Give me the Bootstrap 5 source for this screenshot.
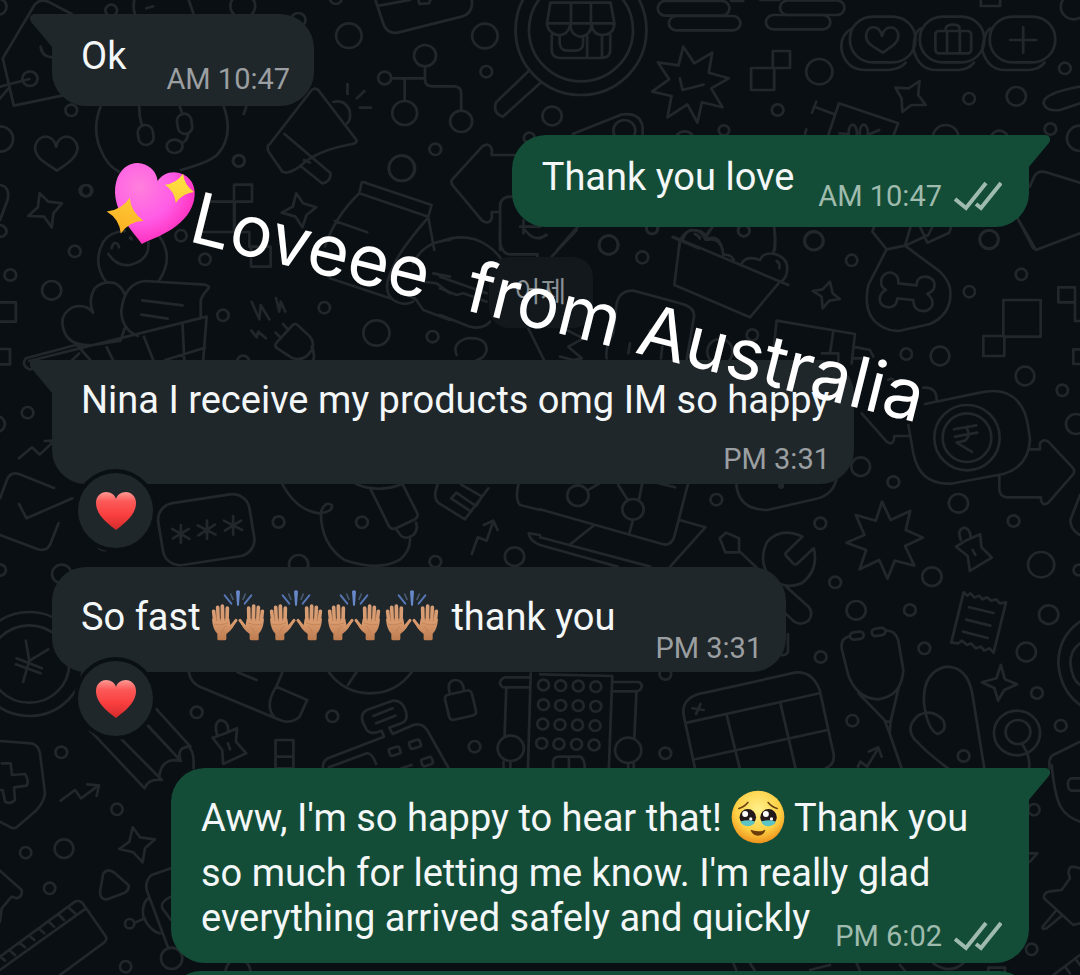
<!DOCTYPE html>
<html lang="en">
<head>
<meta charset="utf-8">
<meta name="viewport" content="width=device-width, initial-scale=1">
<title>Chat</title>
<link rel="stylesheet" href="https://cdn.jsdelivr.net/npm/bootstrap@5.3.0/dist/css/bootstrap.min.css">
<style>
body{background:#0a0f13;font-family:Roboto,"Noto Sans CJK KR",sans-serif;color:#f4f7f8}
.chat{height:100vh;padding:14px 51px 0 52px}
.wall{top:0;left:0;width:100%;height:100%;z-index:0;fill:none;stroke:#22272b;stroke-width:8;stroke-linecap:round;stroke-linejoin:round}
.bubble{z-index:1;border-radius:34px;background:#20272b;padding:20px 24px 9px 29px;font-size:38px;line-height:45px;max-width:858px}
.bubble.sent{background:#144d37;padding-left:30px;padding-right:27px;align-self:flex-end}
.bubble.tail-l{border-top-left-radius:0}
.sent.tail-r{border-top-right-radius:0}
.tail{top:0;width:22px;height:34px}
.tail-l>.tail{left:-22px;fill:#20272b}
.tail-r>.tail{right:-21px;fill:#144d37}
.says{margin:0;padding-bottom:18px}
.bubble.rich{padding-top:22px;padding-bottom:6px}
.rich .says{padding-bottom:16px}
.when{font-size:29px;line-height:36px;color:#9b9fa1;white-space:nowrap}
.sent .when{color:#9ebbad}
.far{gap:40px}.near{gap:24px}
.ticks{width:48px;height:30px;margin-left:12px;fill:none;stroke:#9ebbad;stroke-width:4}
.foot{right:27px;bottom:9px}
.emo{height:54px;margin-bottom:7px;vertical-align:-20px}
.hands{width:58px}
.face{width:54px}
.day{z-index:1;align-self:center;background:#12181c;border-radius:20px;width:104px;height:71px;line-height:71px;font-size:28px;color:#899094;text-align:center}
.react{left:26px;bottom:-64px;width:75px;height:75px;border:0;background:#20272b;box-shadow:0 0 0 4px #0a0f13}
.react svg{width:42px;height:40px}
.bubble.wide{padding-top:18px;padding-bottom:7px;width:802px;max-width:100%}
.wide .says{margin-right:-12px}
.caption{z-index:3;left:120px;top:154px;font-family:Inter,sans-serif;font-size:71px;line-height:84px;color:#fff;white-space:pre;transform:rotate(14deg);transform-origin:0 0}
.caption svg{width:86px;height:84px}
.next{height:60px}
.g1{margin-top:29px}.g2{margin-top:30px}.g3{margin-top:32px}.g4{margin-top:83px}.g5{margin-top:96px}.g6{margin-top:8px}
</style>
</head>
<body>
<svg width="0" height="0" class="position-absolute" aria-hidden="true">
  <defs>
    <linearGradient id="skin" x1="0" y1="70" x2="0" y2="182" gradientUnits="userSpaceOnUse"><stop offset="0" stop-color="#d69f78"/><stop offset=".5" stop-color="#d99a6d"/><stop offset="1" stop-color="#bd7b4e"/></linearGradient>
    <linearGradient id="red" x1="0" y1="0" x2="0" y2="1"><stop offset="0" stop-color="#ff9a94"/><stop offset=".25" stop-color="#fb5a58"/><stop offset=".6" stop-color="#fa3f40"/><stop offset="1" stop-color="#d42a2a"/></linearGradient>
    <radialGradient id="pink" cx=".3" cy=".3" r=".85"><stop offset="0" stop-color="#ff7fdc"/><stop offset=".5" stop-color="#ff5ce6"/><stop offset="1" stop-color="#ff1fae"/></radialGradient>
    <linearGradient id="gold" x1="0" y1="0" x2="0" y2="1"><stop offset="0" stop-color="#ffe345"/><stop offset="1" stop-color="#fcaf22"/></linearGradient>
    <radialGradient id="sun" cx=".5" cy=".35" r=".65"><stop offset="0" stop-color="#fff08a"/><stop offset=".65" stop-color="#fdd044"/><stop offset="1" stop-color="#ee921c"/></radialGradient>
    <g id="palm" stroke="url(#skin)" stroke-linecap="round" fill="none">
      <path d="M39 93L43 128M51 81L53 128M65 77L66 128M80 83L79 128" stroke-width="11"/>
      <path d="M106 120L90 141" stroke-width="9"/>
      <path d="M34 115L86 115L89 134L106 118Q100 145 77 161V176Q77 180 72 180H54Q49 180 50 174V160Q36 147 34 115Z" fill="url(#skin)" stroke="none"/>
      <path d="M40 132Q60 138 82 128M76 137Q66 145 63 156" stroke="#a86a42" stroke-width="2" opacity=".6"/>
      <path d="M45 90L48 121M58 82L59 121M73 84L72 121" stroke="#9a6544" stroke-width="2" opacity=".7"/>
    </g>
    <symbol id="raise" viewBox="28 26 174 162">
      <path d="M106 33Q112 27 118 33L115 74Q112 80 109 74Z" fill="#6688c8"/>
      <path d="M72 45L92 70M152 45L132 70" stroke="#5576b4" stroke-width="6" stroke-linecap="round"/>
      <path d="M90 41L97 57M134 41L127 57" stroke="#46596f" stroke-width="5" stroke-linecap="round"/>
      <use href="#palm"/><use href="#palm" transform="matrix(-1 0 0 1 224 0)"/>
    </symbol>
    <symbol id="heart" viewBox="0 0 42 40"><path d="M21 39C15 34 1 25 1 12C1 5 6 1 11 1C16 1 20 4 21 8C22 4 26 1 31 1C36 1 41 5 41 12C41 25 27 34 21 39Z" fill="url(#red)"/></symbol>
    <symbol id="tick" viewBox="0 0 48 30"><path d="M1 18L12 27L32 2M22 23L27 27L47 2"/></symbol>
    <symbol id="point" viewBox="0 0 22 34"><path d="M22 0H5C0 0-2 5 2 9L22 33Z"/></symbol>
  </defs>
</svg>

<main class="chat position-relative overflow-hidden d-flex flex-column align-items-start">
<svg class="wall position-absolute" viewBox="0 0 1080 975" preserveAspectRatio="xMinYMin slice" aria-hidden="true">
  <!-- top left: tag, apple, megaphone, network -->
  <g transform="scale(.3444 .3333)">
    <path d="M208 42L140 5Q115 -5 100 15L8 175L40 317L180 287M118 140Q122 172 155 172M0 260L85 237M0 295L25 265"/>
    <circle cx="87" cy="236" r="22"/><circle cx="323" cy="31" r="17"/><circle cx="207" cy="331" r="17"/><circle cx="0" cy="417" r="38"/><circle cx="248" cy="572" r="17"/><circle cx="-5" cy="20" r="24"/><circle cx="705" cy="18" r="36"/><circle cx="866" cy="60" r="21"/><circle cx="1013" cy="107" r="37"/><circle cx="1408" cy="108" r="37"/><circle cx="1412" cy="215" r="17"/><circle cx="975" cy="-5" r="17"/><circle cx="693" cy="482" r="17"/><circle cx="1264" cy="448" r="17"/><circle cx="1167" cy="505" r="38"/><circle cx="1537" cy="414" r="16"/>
    <path d="M163 440C155 400 110 400 102 440C100 475 135 490 165 512C195 492 228 470 225 440C215 400 170 400 163 440Z"/>
    <path d="M390 0Q385 25 392 42M548 0L562 42M425 25L445 19M292 320Q265 390 295 455Q310 495 345 515M650 320Q680 410 630 465Q600 490 525 510M715 320L708 342M404 320Q404 350 412 375M522 320L530 343"/>
    <rect x="401" y="375" width="44" height="60" rx="22" transform="rotate(-8 423 405)"/><rect x="515" y="341" width="42" height="61" rx="21" transform="rotate(-8 536 371)"/><ellipse cx="507" cy="439" rx="23" ry="20"/><path d="M546 402Q544 422 531 428"/>
    <path d="M905 270Q915 262 924 270L1035 420Q1036 430 1024 432Q920 450 870 500Q835 525 820 515L780 455Q772 438 785 430ZM826 402L960 520Q960 548 935 550L872 497M883 480L900 488M968 306Q1000 298 1015 330Q1020 360 1008 370M1009 252V282M1036 295L1058 273M1045 323H1077"/>
    <circle cx="1117" cy="234" r="19"/><circle cx="1234" cy="167" r="32"/><circle cx="1175" cy="339" r="36"/><circle cx="1339" cy="364" r="32"/>
    <path d="M1136 235H1234M1175 238V303M1234 200V240Q1234 258 1255 259H1320Q1339 260 1339 280V330M1090 0L1110 62Q1120 103 1155 98L1340 50Q1375 40 1370 0M1100 17L1190 0M1215 0L1218 12L1245 10L1250 0"/>
    <path d="M1538 210L1440 307Q1430 340 1460 350L1568 250"/>
    <ellipse cx="1687" cy="90" rx="151" ry="154"/><ellipse cx="1687" cy="90" rx="190" ry="195"/>
    <path d="M115 580L140 605L180 610L155 640L150 682L128 650L82 648L110 622ZM860 580L880 610L918 622L890 645L878 682L858 650L818 638L850 620Z"/>
    <path d="M0 555Q30 560 22 600L0 660M0 675Q22 680 18 700Q10 712 0 710"/>
    <path d="M1568 465H1428V448Q1420 425 1400 440L1312 540Q1308 550 1316 558L1400 662Q1420 675 1428 655V636H1450M1568 590H1480Q1452 592 1452 620V750M1510 680H1568M1520 660V700"/>
  </g>
  <!-- shop, badges, star burst -->
  <g transform="translate(540 0) scale(.3444 .3333)">
    <path d="M30 8H205L216 70Q215 105 180 105Q155 105 150 75Q145 110 115 110Q90 105 88 75Q80 108 50 105Q25 100 20 72L30 8ZM20 70H216M90 8V75M148 8V75M34 105V150Q34 174 60 174H180Q204 172 204 150V105M137 110V172M180 108V172M57 108V130Q60 152 80 152H105Q125 150 125 130V112"/>
    <rect x="342" y="3" width="208" height="44" rx="22"/><rect x="374" y="48" width="208" height="43" rx="22"/><rect x="697" y="1" width="187" height="44" rx="22"/><rect x="656" y="45" width="187" height="43" rx="22"/><path d="M555 3H590M640 0H695"/>
    <path d="M416 140L448 190L500 158L490 218L548 235L497 265L530 322L470 307L457 368L428 313L370 352L382 288L325 275L375 238L342 187L402 196ZM406 235L414 270L475 254"/>
    <path d="M613 204H680V270H613ZM676 153H726V204H676ZM1280 0V18H1336V0"/>
    <circle cx="811" cy="215" r="38"/><circle cx="690" cy="330" r="17"/><circle cx="35" cy="348" r="28"/><circle cx="1246" cy="296" r="17"/><circle cx="1383" cy="289" r="28"/><circle cx="1524" cy="205" r="17"/><circle cx="1482" cy="387" r="17"/><circle cx="1568" cy="415" r="38"/><circle cx="534" cy="391" r="15"/><circle cx="1178" cy="412" r="37"/><circle cx="1550" cy="20" r="38"/><circle cx="1334" cy="418" r="26"/><circle cx="420" cy="422" r="28"/>
    <rect x="900" y="50" width="190" height="137" rx="66"/><rect x="1103" y="50" width="187" height="137" rx="66"/><rect x="1306" y="50" width="190" height="137" rx="66"/>
    <path d="M906 85Q865 110 878 160Q895 212 950 210H1010Q1045 208 1062 188M1106 85Q1085 95 1085 150Q1100 210 1150 210H1215Q1245 208 1260 188M1308 85Q1290 95 1284 150Q1300 210 1350 210H1420Q1450 208 1465 188"/>
    <path d="M993 108C985 72 950 75 947 105C945 135 975 142 995 158C1015 142 1045 130 1040 102C1035 75 1000 75 993 108Z"/>
    <rect x="1148" y="93" width="104" height="67" rx="10"/><path d="M1178 93V85Q1180 74 1199 74Q1218 74 1218 85V93M1182 95V158M1219 95V158M1403 82V158M1365 120H1441"/>
    <path d="M1102 243L1098 285L1120 315L1078 315L1052 336L1050 295L1032 263L1070 265ZM838 402L868 310L1040 370L1028 402M802 305L790 338M797 320L855 343M773 388L770 402M1568 260Q1460 280 1462 310Q1470 335 1510 330L1568 310"/>
    <ellipse cx="908" cy="398" rx="12" ry="24"/><ellipse cx="940" cy="398" rx="12" ry="24"/><path d="M870 400L895 402M958 402L985 390"/>
    <path d="M95 402L235 344Q290 335 298 380V402"/><circle cx="245" cy="392" r="32"/>
    <path d="M1422 560L1435 530Q1445 510 1470 517L1568 548M1387 655L1440 750L1568 700M110 680L50 750M0 715L18 705M385 712L460 745M680 680Q685 720 682 750M403 750Q405 700 440 690Q470 690 480 718Q520 700 530 750M450 702Q460 708 464 716M480 715L500 682"/>
    <circle cx="199" cy="735" r="28"/><circle cx="326" cy="685" r="17"/><circle cx="592" cy="692" r="17"/><circle cx="796" cy="723" r="27"/><circle cx="1304" cy="718" r="27"/>
  </g>
  <!-- bread bag, smiling face, bouquet -->
  <g transform="translate(90 150) scale(.3333)">
    <path d="M815 98Q822 94 830 100L1025 165L1015 200L808 130ZM808 130Q735 200 705 290M735 213L832 247M1015 202L1033 300M1015 202Q930 300 915 340Q870 420 910 450Q940 470 970 455M720 385L900 445M980 450L930 420M1080 270Q1000 275 970 340M1080 380L1030 370M1080 430L1040 400L1000 395M1080 510L1000 480L975 445"/>
    <path d="M432 104H486V155H432ZM350 155H434V246H330M432 155V246H478V290M483 290H542V350H483Z"/>
    <circle cx="273" cy="257" r="17"/><circle cx="345" cy="328" r="17"/><circle cx="703" cy="473" r="17"/><circle cx="399" cy="496" r="17"/><circle cx="447" cy="33" r="17"/><circle cx="-10" cy="122" r="17"/><circle cx="935" cy="55" r="38"/>
    <path d="M50 398Q5 340 40 275Q60 245 105 243M205 255Q255 320 207 392M55 312Q80 350 120 345Q180 330 175 278M65 295Q68 275 80 280Q88 285 87 292M120 265Q122 258 125 268M485 456L508 508L512 465L538 508M558 444L568 485L572 455L586 485"/>
  </g>
  <!-- popcorn tray, bone bag -->
  <g transform="translate(440 230) scale(.3333)">
    <path d="M180 0V35Q185 72 210 73H293L292 80M410 0L335 80M255 0Q285 40 320 15M0 35Q80 5 140 45Q170 65 185 90M0 140L140 190M0 175L50 195L70 190L140 215M0 255L90 290Q130 300 150 275"/>
    <path d="M700 20L1045 165M720 30L703 165L930 262L1020 155M730 25Q740 0 760 0Q795 0 800 30Q845 20 850 75Q870 70 882 90M905 100Q920 75 960 90Q970 65 1005 72Q1050 85 1040 130Q1035 150 1020 155M765 12Q775 15 780 22M1010 93Q1022 100 1018 115M1003 0Q1008 40 1000 70M795 20L810 0"/>
    <circle cx="506" cy="45" r="28"/><circle cx="607" cy="82" r="18"/><circle cx="1121" cy="32" r="28"/><circle cx="937" cy="315" r="17"/><circle cx="840" cy="365" r="38"/><circle cx="636" cy="-5" r="17"/><circle cx="911" cy="2" r="17"/>
    <path d="M500 385Q495 350 520 310L530 220Q540 180 580 182L720 220Q765 230 762 260L740 390M570 340L565 370M630 300L628 330M667 350L663 385M50 375Q35 340 80 325Q140 320 140 360Q135 385 110 390M265 295L312 390M380 300L430 325L385 350L425 385L400 390L360 380M1170 155L1178 190L1200 207L1168 212L1148 235L1145 200L1118 183L1148 178ZM1010 272L1245 312L1235 400M1010 272L998 385M1180 305L1170 370H1195V400M1145 370H1170M1240 350L1290 360L1300 380M1240 385H1265M1345 450Q1355 440 1365 455"/>
  </g>
  <g transform="translate(840 220) scale(.3333)">
    <path d="M110 0L97 35L140 88L195 77L215 10M195 77L265 45M140 88L85 195Q65 290 130 322Q160 338 190 330L270 312Q340 280 330 205Q325 180 300 155L195 77M240 20L262 68L328 38L335 15M265 45L280 15"/>
    <path d="M175 190L230 196Q230 168 260 170Q290 178 282 205Q278 215 262 222Q285 240 275 260Q260 280 235 270Q220 262 220 240L172 235Q170 262 145 262Q115 258 120 230Q125 215 138 210Q118 200 125 175Q135 155 155 158Q178 165 175 190Z"/>
    <path d="M490 240H602V350H490ZM430 348H493V408H430ZM655 202H705V247H655ZM705 247V303H720M720 388H700V432H720M535 0L580 85"/>
    <circle cx="447" cy="59" r="28"/><circle cx="544" cy="163" r="17"/><circle cx="388" cy="215" r="17"/><circle cx="35" cy="121" r="17"/><circle cx="199" cy="402" r="17"/><circle cx="300" cy="408" r="28"/><circle cx="555" cy="468" r="28"/><circle cx="667" cy="511" r="17"/><circle cx="708" cy="612" r="30"/><circle cx="62" cy="740" r="28"/>
    <circle cx="381" cy="653" r="98"/><circle cx="381" cy="653" r="73"/>
    <path d="M342 628L409 616M345 650L412 638M378 622Q395 645 375 662L350 668L396 696M255 552L420 518Q520 495 555 580Q565 610 570 660Q565 740 490 762L340 790Q240 800 220 700L205 615M250 503Q290 500 290 540M65 580L140 665Q160 680 163 650V648H208M570 688H600V670Q610 655 625 665L700 745Q706 755 698 765L625 848Q608 860 603 840V832H500Q480 830 478 810V765"/>
  </g>
  <!-- middle left: basket, plug, card -->
  <g transform="translate(0 250) scale(.3444 .3333)">
    <path d="M0 157H46V215H0M0 297H29V343H0M270 188Q255 150 275 115Q300 90 335 100Q358 115 362 135M270 188Q250 160 210 172Q170 195 185 240Q200 290 270 285L350 272L362 235M400 258Q355 240 352 185Q360 100 420 93L595 104Q610 108 605 115Q588 135 583 150V205M413 151L530 166M411 194L487 206M75 325L220 285Q240 280 238 300M75 325Q60 345 85 358L95 357M85 333L600 200L590 330M530 222L535 330M418 260L445 330M310 292L328 330M225 287L262 330M480 330L595 293M230 310L210 330"/>
    <path d="M850 225Q857 218 865 226L900 260Q915 280 905 300Q885 335 850 325L805 295Q795 288 803 278ZM822 222L833 235M800 248L812 260M905 290Q915 310 910 330M730 242L745 262L750 245L772 265"/>
    <circle cx="30" cy="75" r="17"/><circle cx="150" cy="121" r="28"/><circle cx="217" cy="4" r="17"/><circle cx="1093" cy="249" r="38"/><circle cx="1256" cy="260" r="17"/><circle cx="80" cy="488" r="17"/><circle cx="-10" cy="522" r="24"/><circle cx="706" cy="334" r="17"/><circle cx="809" cy="816" r="17"/><circle cx="1051" cy="817" r="17"/><circle cx="1264" cy="935" r="17"/><circle cx="867" cy="943" r="28"/><circle cx="1494" cy="920" r="28"/><circle cx="179" cy="972" r="28"/>
    <path d="M55 625L93 592L115 614L155 575M130 573L155 572M157 714L55 672Q30 665 20 690L0 745M210 745L77 805L55 762M170 820L145 885Q135 905 110 898L0 855M285 892Q295 905 318 898"/>
    <rect x="465" y="745" width="268" height="188" rx="50" transform="rotate(-9 600 840)"/>
    <path d="M525 825V878M500 837L550 867M548 837L502 865M601 812V866M574 826L626 854M624 824L576 856M677 798V854M650 812L703 840M700 812L653 842"/>
    <path d="M820 703Q860 780 925 790Q970 785 963 765Q945 752 932 785Q930 880 1000 930Q1100 965 1160 930Q1195 900 1190 860M1035 703Q1100 730 1165 703M1075 715L1130 830Q1138 840 1150 835L1205 808Q1215 800 1212 790L1170 705M1152 840L1165 858Q1180 870 1200 855Q1215 840 1208 818M1270 705Q1255 745 1275 760L1350 808L1418 715M1338 703L1400 740L1382 768L1325 728L1310 745L1368 785M1370 912L1387 862L1413 872L1432 815M1405 825L1432 812L1445 840M1505 703Q1495 750 1510 765L1568 780M1568 855L1535 850Q1540 875 1568 885"/>
  </g>
  <!-- middle right: whiteboard, wrench, receipt, calendar, stethoscope -->
  <g transform="translate(540 430) scale(.3444 .3333)">
    <circle cx="110" cy="197" r="31"/><circle cx="270" cy="238" r="31"/><circle cx="700" cy="168" r="5"/><circle cx="512" cy="209" r="17"/><circle cx="814" cy="280" r="17"/><circle cx="1026" cy="156" r="17"/><circle cx="1215" cy="220" r="28"/><circle cx="1375" cy="273" r="17"/><circle cx="1455" cy="404" r="38"/><circle cx="1565" cy="420" r="16"/><circle cx="857" cy="457" r="17"/><circle cx="1138" cy="440" r="28"/><circle cx="918" cy="541" r="28"/><circle cx="1074" cy="540" r="17"/><circle cx="1477" cy="554" r="28"/><circle cx="1116" cy="655" r="17"/><circle cx="1412" cy="666" r="28"/><circle cx="815" cy="681" r="17"/><circle cx="1443" cy="789" r="17"/><circle cx="1512" cy="887" r="17"/><circle cx="907" cy="872" r="17"/><circle cx="1230" cy="978" r="17"/><circle cx="364" cy="970" r="17"/><circle cx="364" cy="732" r="17"/>
    <path d="M137 182L172 160M227 165L255 210M297 160L287 210M270 270L260 308M345 160L392 172M430 160L390 320Q380 350 355 342L0 238M405 270L480 292L378 410M0 322L320 410M0 345L225 410M155 287L88 343M570 160Q575 240 660 240L800 207Q850 195 860 150"/>
    <path d="M540 308L578 325V367H538L522 325ZM580 365L628 412M762 320Q700 290 660 335Q635 385 660 430Q700 485 760 460Q810 420 795 355L745 403Q740 405 735 400L715 378Q710 372 716 366L762 320M715 470L780 530Q795 550 780 572Q755 590 735 572L712 550M720 612V665Q715 678 700 675"/>
    <path d="M993 215L1018 270L1075 243L1062 300L1112 323L1060 348L1087 407L1030 392L1009 446L985 390L928 418L947 360L890 338L942 315L917 255L975 272Z"/>
    <path d="M1222 330Q1210 300 1230 293Q1250 295 1250 322M1208 350L1240 330L1278 313L1282 352L1312 383L1248 423L1242 378ZM1256 360L1264 375"/>
    <path d="M1230 487L1240 497L1250 490L1262 503L1275 497L1285 508L1298 502L1310 512L1325 508L1335 520L1353 517L1317 668L1305 655L1290 662L1280 650L1265 655L1252 640L1240 645L1225 632L1215 640L1194 638ZM1246 532L1317 549M1237 569L1308 587M1228 605L1300 624"/>
    <rect x="900" y="606" width="40" height="22" rx="11" transform="rotate(-8 920 617)"/><rect x="963" y="595" width="40" height="22" rx="11" transform="rotate(-8 983 606)"/>
    <path d="M900 618Q870 625 877 660L895 735Q920 805 980 808Q1050 800 1055 720L1040 630Q1030 600 1005 602M925 790L1005 875H1018L1042 770M1000 870L1015 910L1050 1015M1015 910L1018 875M1290 1015L1255 790Q1240 710 1180 710Q1110 725 1115 820Q1125 900 1155 912Q1185 900 1170 870Q1140 835 1100 855Q1060 890 1085 925Q1130 975 1185 1015M1338 705L1350 748L1385 763L1348 780L1330 812L1320 775L1283 757L1325 745Z"/>
    <circle cx="1385" cy="909" r="67"/><circle cx="1388" cy="906" r="36"/><path d="M1400 942Q1425 980 1420 1015M1568 935L1490 975Q1475 985 1480 1015M1568 575Q1505 620 1505 700Q1510 780 1568 825M1568 640Q1540 660 1540 700Q1545 750 1568 765M1568 195L1540 270Q1540 300 1568 315"/>
    <path d="M435 805Q450 792 480 788L740 728Q790 722 812 780L850 960Q862 1000 830 1015M435 805Q410 825 418 860L450 1015M427 878L812 790M450 988L835 900M542 855L580 1015M698 820L742 1015M443 835L475 840M453 852L466 822M923 1010L930 995L950 1010L982 955M955 965L982 952L992 980"/>
    <path d="M0 733L210 738L200 1015M213 756H285Q298 760 295 772Q290 785 278 784H213M280 786L274 922M256 1000V1015M272 1000V1015M38 1015V995Q40 980 55 980H115Q130 985 130 1015M84 980V1015"/>
    <circle cx="256" cy="961" r="38"/>
    <g id="bulbs"><circle cx="10" cy="765" r="16"/><circle cx="60" cy="767" r="16"/><circle cx="111" cy="768" r="16"/><circle cx="162" cy="770" r="16"/></g>
    <use href="#bulbs" y="59"/><use href="#bulbs" x="-2" y="117"/><use href="#bulbs" x="-5" y="175"/>
  </g>
  <!-- lower left: coin, pencil, till, padlock -->
  <g transform="translate(0 560) scale(.3444 .3333)">
    <circle cx="85" cy="312" r="116"/><circle cx="85" cy="312" r="156"/>
    <path d="M75 242L85 303L140 268M85 303L67 366M48 295L122 325M46 313L118 340"/>
    <circle cx="178" cy="577" r="17"/><circle cx="571" cy="457" r="17"/><circle cx="965" cy="469" r="17"/><circle cx="1378" cy="560" r="17"/><circle cx="0" cy="30" r="17"/>
    <path d="M262 512L420 685M350 535L470 660Q430 655 420 685M425 492L525 603Q470 590 462 650M450 443L553 560Q510 560 525 603M545 558Q565 570 562 625"/>
    <path d="M630 522Q620 490 640 480Q665 485 662 512M617 533L655 520L688 505L685 545L715 580L648 612L645 570ZM662 550L668 568M800 540H852V625H800ZM800 590H852M548 337Q555 370 580 380L820 483Q850 490 870 470L892 420L802 380L820 337M802 380Q765 440 800 475M690 337L745 360M955 337Q1000 400 1075 400Q1150 400 1195 337M1035 337L1010 375"/>
    <path d="M938 625Q935 600 960 592L1115 530L1108 512Q1070 530 1060 500Q1040 465 1065 450L1140 422Q1165 420 1175 445Q1190 480 1165 490L1130 503L1140 522L1200 495Q1225 488 1240 510L1303 625M1084 468L1140 445M1092 490L1148 467M955 622L1065 580Q1080 578 1092 612"/>
    <rect x="1130" y="563" width="32" height="22" rx="6" transform="rotate(-18 1145 574)"/><rect x="1189" y="542" width="32" height="22" rx="6" transform="rotate(-18 1205 553)"/><rect x="1224" y="594" width="32" height="22" rx="6" transform="rotate(-18 1240 605)"/><path d="M1165 625L1195 615"/>
    <rect x="1297" y="397" width="80" height="77" rx="12" transform="rotate(-13 1337 435)"/><path d="M1306 400Q1295 360 1325 360Q1345 362 1347 390"/>
    <path d="M1536 352H1465Q1450 360 1452 372Q1458 385 1470 382H1536M1470 385L1465 530M1462 605V625M1482 605V625M1541 340L1533 625"/><circle cx="1483" cy="565" r="38"/>
  </g>
  <!-- bottom: shield, ruler, sparkles -->
  <g transform="translate(0 740) scale(.3333)">
    <path d="M0 3L95 10Q115 15 120 40L135 160Q132 185 110 210L50 262Q40 268 28 260L0 245M5 70H32L36 105L75 102Q88 120 80 137L42 142L45 180Q30 195 15 185L8 150H-5M182 182L225 150L243 175L295 137M262 133L297 136L290 168M398 262L420 292L465 298L435 325L428 367L400 337L358 327L388 305ZM310 400Q325 382 345 400L385 435Q390 448 375 458L322 478Q300 480 300 455ZM0 392L65 450Q68 470 50 475L35 470L5 505L0 545M0 650L225 485Q238 478 248 490L318 590Q322 600 312 608L180 705M0 690L258 505M0 650L15 662M28 630L45 645M58 608L75 622M88 587L103 600M118 567L133 580M148 547L162 560M178 526L192 540M208 505L225 520M513 385L455 405Q435 420 440 450L505 625M445 475Q425 490 430 530Q450 575 480 580M405 548L435 535M513 470Q480 485 487 505L513 540M675 700Q680 660 713 655Q750 660 752 700"/>
    <circle cx="351" cy="208" r="17"/><circle cx="192" cy="326" r="28"/><circle cx="77" cy="338" r="17"/><circle cx="149" cy="445" r="17"/><circle cx="389" cy="551" r="14"/><circle cx="377" cy="680" r="17"/><circle cx="515" cy="655" r="32"/>
  </g>
  <g transform="translate(700 765) scale(.3333)">
    <path d="M1055 0Q1065 100 1085 130Q1100 155 1140 170M1140 40H1115Q1102 45 1104 60Q1105 75 1115 77H1140M990 265H1012L990 290M1120 305Q1105 305 1106 325L1110 340L1085 375L1045 380Q1030 385 1032 400L1120 480L1140 475M1070 435L1028 485Q1025 495 1040 490L1088 450M1120 305L1140 310M1060 630L1140 570M1095 605L1110 625M1125 580L1140 600M865 630V608H915V630M700 595Q750 630 790 595M600 600L615 618M100 595L110 618M150 595L165 618M330 615L390 600M470 595L480 618"/>
    <circle cx="1002" cy="134" r="17"/><circle cx="995" cy="553" r="17"/>
  </g>
</svg>

<article class="bubble tail-l position-relative d-flex align-items-end far">
  <svg class="tail position-absolute"><use href="#point"/></svg>
  <p class="says">Ok</p><time class="when">AM 10:47</time>
</article>

<article class="bubble sent tail-r position-relative d-flex align-items-end near g1">
  <svg class="tail position-absolute"><use href="#point" transform="matrix(-1 0 0 1 22 0)"/></svg>
  <p class="says">Thank you love</p>
  <span class="when d-flex align-items-center pb-1"><time>AM 10:47</time><svg class="ticks"><use href="#tick"/></svg></span>
</article>

<div class="day position-relative g2">어제</div>

<article class="bubble wide tail-l position-relative d-flex flex-column g3">
  <svg class="tail position-absolute"><use href="#point"/></svg>
  <p class="says">Nina I receive my products omg IM so happy</p>
  <time class="when align-self-end">PM 3:31</time>
  <button type="button" class="react position-absolute rounded-circle p-0 d-flex align-items-center justify-content-center" aria-label="Heart reaction"><svg><use href="#heart"/></svg></button>
</article>

<article class="bubble rich position-relative d-flex align-items-end far g4">
  <p class="says">So fast <svg class="emo hands"><use href="#raise"/></svg><svg class="emo hands"><use href="#raise"/></svg><svg class="emo hands"><use href="#raise"/></svg><svg class="emo hands"><use href="#raise"/></svg> thank you</p>
  <time class="when">PM 3:31</time>
  <button type="button" class="react position-absolute rounded-circle p-0 d-flex align-items-center justify-content-center" aria-label="Heart reaction"><svg><use href="#heart"/></svg></button>
</article>

<article class="bubble sent rich tail-r position-relative w-100 g5">
  <svg class="tail position-absolute"><use href="#point" transform="matrix(-1 0 0 1 22 0)"/></svg>
  <p class="says">Aww, I'm so happy to hear that! <svg class="emo face" viewBox="88 78 164 164">
    <circle cx="170" cy="160" r="80" fill="url(#sun)"/>
    <path d="M112 134Q128 130 139 116M201 116Q212 130 228 134" fill="none" stroke="#6b4310" stroke-width="5" stroke-linecap="round"/>
    <circle cx="139" cy="161" r="25" fill="#24191a"/><circle cx="202" cy="161" r="25" fill="#24191a"/>
    <path d="M117 174Q139 166 161 174Q157 187 139 188Q121 187 117 174ZM180 174Q202 166 224 174Q220 187 202 188Q184 187 180 174Z" fill="#5cc4c4"/>
    <circle cx="131" cy="151" r="9" fill="#fff"/><circle cx="194" cy="151" r="9" fill="#fff"/><circle cx="148" cy="166" r="5" fill="#fff"/><circle cx="211" cy="166" r="5" fill="#fff"/>
    <path d="M147 199Q170 208 193 199Q188 216 170 217Q152 216 147 199Z" fill="#6b3c0c"/>
  </svg> Thank you<br>so much for letting me know. I'm really glad<br>everything arrived safely and quickly</p>
  <span class="when foot position-absolute d-flex align-items-center"><time>PM 6:02</time><svg class="ticks"><use href="#tick"/></svg></span>
</article>

<article class="bubble sent next position-relative w-100 flex-shrink-0 g6" aria-label="Next message"></article>

<div class="caption position-absolute d-flex align-items-center"><svg viewBox="0 0 86 84" aria-hidden="true">
  <path d="M43 82C36 75 3 57 3 28C3 13 13 4 24 4C33 4 40 9 43 17C46 9 53 4 62 4C74 4 83 13 83 28C83 57 50 75 43 82Z" fill="url(#pink)"/>
  <path d="M20 40Q25 54 39 59Q25 63 20 77Q15 63 1 59Q15 54 20 40ZM66 4Q70 15 81 19Q70 23 66 34Q62 23 51 19Q62 15 66 4Z" fill="url(#gold)"/>
</svg><span>Loveee  from Australia</span></div>
</main>
<script src="https://cdn.jsdelivr.net/npm/bootstrap@5.3.0/dist/js/bootstrap.bundle.min.js"></script>
</body>
</html>
